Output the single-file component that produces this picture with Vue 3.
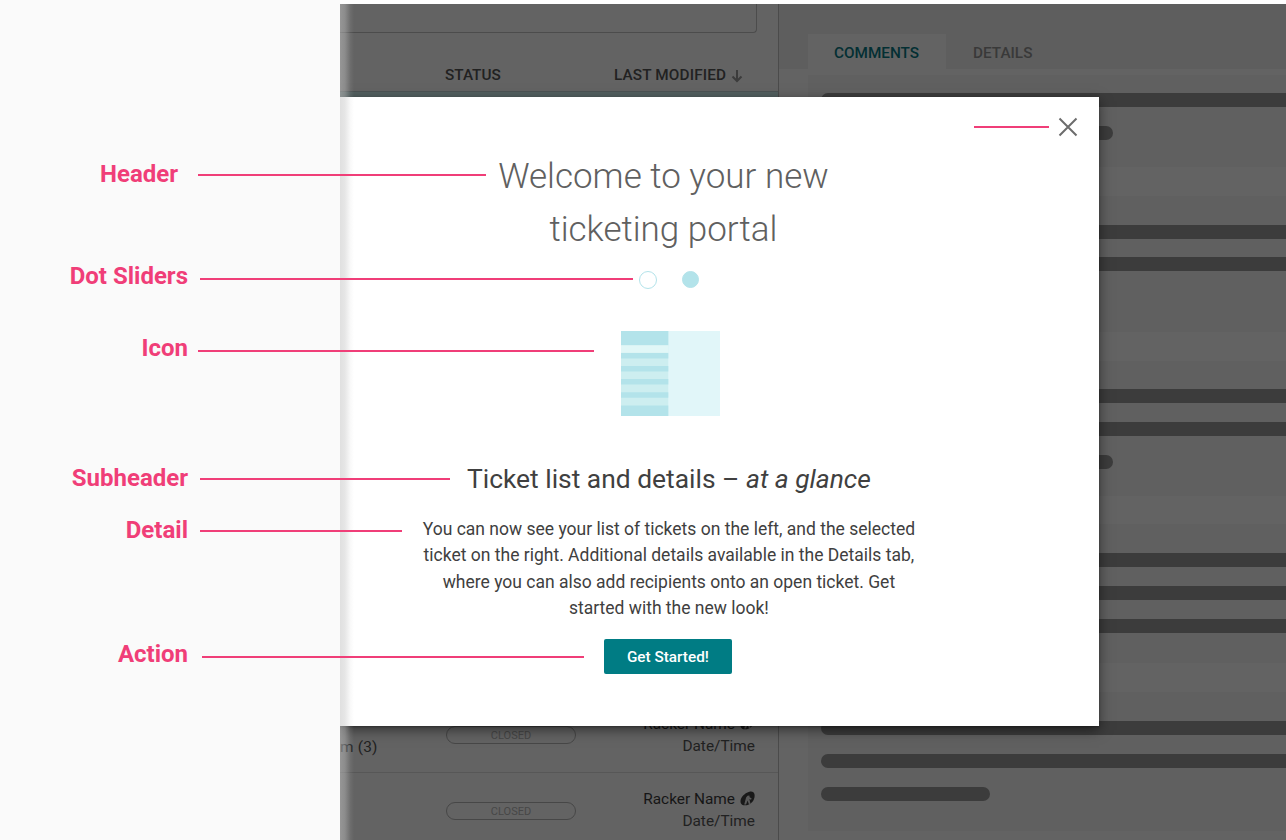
<script setup>
const callouts = [
  { id: 'header', text: 'Header', right: 178, top: 174, from: 198, to: 486 },
  { id: 'dots', text: 'Dot Sliders', right: 188, top: 276, from: 200, to: 633, line: 278 },
  { id: 'icon', text: 'Icon', right: 188, top: 348, from: 198, to: 594, line: 350 },
  { id: 'sub', text: 'Subheader', right: 188, top: 478, from: 200, to: 450 },
  { id: 'detail', text: 'Detail', right: 188, top: 530, from: 200, to: 402 },
  { id: 'action', text: 'Action', right: 188, top: 654, from: 202, to: 584, line: 656 },
].map((c) => ({ ...c, line: c.line ?? c.top }))

const comments = [['full', 'mid'], ['full', 'full'], ['full', 'full', 'mid'], ['full', 'full', 'full'], ['full', 'full', 'short']]
const sizes = ['c1', 'c2', 'c3', 'c4', 'c5']
const rows = [{ note: 'm (3)' }, { note: '' }]
</script>

<template>
  <main class="stage">
    <section class="app">
      <div class="list">
        <div class="search"></div>
        <div class="thead">
          <span class="th-status">STATUS</span>
          <span class="th-mod">LAST MODIFIED</span>
          <svg class="arrow" width="12" height="14" viewBox="0 0 12 14"><path d="M6 1v11M1.500 7.500 6 12l4.500-4.500" /></svg>
        </div>
        <div class="selected"></div>
        <div class="rows">
          <div v-for="(r, i) in rows" :key="i" class="row">
            <span class="note">{{ r.note }}</span>
            <span class="pill">CLOSED</span>
            <div class="who">
              <div class="name">
                Racker Name
                <svg width="16" height="16" viewBox="0 0 16 16">
                  <path class="disc" d="M10 .8c2.500-.7 4.500 0 5.300 2 .9 2.800-.2 6.800-2.500 9.200-2.300 2.500-5.700 3.700-9.200 3.200C1.200 14.800.2 12.500.6 10 1.100 6.600 4.300 2.600 10 .8Z" />
                  <path class="cut" d="M4.500 14.500 6.500 7 8 5l2-.3.300 2 2.200 1.300-.8 1.200-1.700-.6 1.200 5-1.700.6-1.500-4.200-1.500 4.500Z" />
                </svg>
              </div>
              <div>Date/Time</div>
            </div>
          </div>
        </div>
      </div>
      <div class="detail-pane">
        <div class="tabs">
          <span class="tab on">COMMENTS</span>
          <span class="tab">DETAILS</span>
        </div>
        <div class="comments">
          <div v-for="(c, i) in comments" :key="i" class="comment" :class="sizes[i]">
            <div v-for="(b, j) in c" :key="j" class="bar" :class="b"></div>
          </div>
        </div>
      </div>
      <div class="modal">
        <svg class="close" width="20" height="20" viewBox="0 0 20 20"><path d="M1.500 1.500l17 17M18.500 1.500l-17 17" /></svg>
        <h1>Welcome to your new<br />ticketing portal</h1>
        <div class="dots"><i class="dot"></i><i class="dot active"></i></div>
        <svg class="picture" width="99" height="85" viewBox="0 0 99 85">
          <rect width="99" height="85" fill="#e1f6f9" />
          <rect width="47.300" height="85" fill="#cdeef0" />
          <rect width="47.300" height="14.300" fill="#b3e3ea" />
          <rect y="14.300" width="47.300" height="7.500" fill="#e1f7f7" />
          <path d="M0 24.700h47.300M0 37.700h47.300M0 50.800h47.300M0 64h47.300" stroke="#b3e3ea" stroke-width="5.600" />
          <rect y="74.500" width="47.300" height="10.500" fill="#b3e3ea" />
        </svg>
        <h2>Ticket list and details – <em>at a glance</em></h2>
        <p>
          You can now see your list of tickets on the left, and the selected<br />
          ticket on the right. Additional details available in the Details tab,<br />
          where you can also add recipients onto an open ticket. Get<br />
          started with the new look!
        </p>
        <button type="button">Get Started!</button>
      </div>
      <div class="edge"></div>
    </section>
    <template v-for="c in callouts" :key="c.id">
      <div class="label" :style="{ width: c.right + 'px', top: c.top - 15 + 'px' }">{{ c.text }}</div>
      <div class="line" :style="{ left: c.from + 'px', width: c.to - c.from + 'px', top: c.line + 'px' }"></div>
    </template>
    <div class="line close-line"></div>
  </main>
</template>

<style>
body { background: #fafafa; overflow: hidden; }
</style>

<style scoped>
* { box-sizing: border-box; }
.stage { position: relative; width: 1286px; height: 840px; overflow: hidden; background: #fafafa; font-family: Roboto, "Liberation Sans", sans-serif; }
.app { position: relative; margin-left: 340px; height: 836px; box-sizing: content-box; display: flex; border-top: 4px solid #fff; background: #636363; overflow: hidden; }
.list { width: 439px; flex: none; border-right: 1px solid #4b4b4b; display: flex; flex-direction: column; color: #212121; }
.search { width: 417px; height: 29px; flex: none; border: solid #4c4c4c; border-width: 0 1px 1px 0; border-bottom-right-radius: 4px; }
.thead { height: 58px; flex: none; display: flex; align-items: flex-end; padding-bottom: 7px; font-size: 15.300px; line-height: 18px; font-weight: 500; }
.th-status { margin-left: 105px; width: 169px; }
.th-mod { white-space: nowrap; letter-spacing: .15px; }
.arrow { margin: 0 0 1px 5px; }
.arrow path { fill: none; stroke: #3c3c3c; stroke-width: 2; }
.selected { height: 600px; flex: none; border-top: 1px solid #4c5354; background: #536060; }
.rows { margin-top: 6px; background: #636363; }
.row { height: 75.500px; display: flex; border-bottom: 1px solid #575757; font-size: 15.400px; line-height: 22px; }
.note { width: 106px; padding-top: 39px; height: 75px; flex: none; letter-spacing: .2px; }
.pill { width: 130px; height: 18px; margin-top: 29px; flex: none; border: 1px solid #474747; border-radius: 9px; color: #474747; font-size: 11px; line-height: 18px; text-align: center; }
.who { width: 179px; padding-top: 15.500px; text-align: right; white-space: nowrap; }
.name { display: flex; justify-content: flex-end; align-items: center; gap: 5px; color: #161616; }
.name svg { width: 15px; height: 15px; margin-top: -2px; }
.disc { fill: #191919; }
.cut { fill: #585858; }
.detail-pane { flex: 1; min-width: 0; }
.tabs { height: 65px; padding: 30px 0 0 29px; display: flex; background: #5e5e5e; font-size: 15.300px; font-weight: 500; line-height: 39px; }
.tab { padding: 0 27px; color: #393939; }
.tab.on { width: 138px; padding: 0 0 0 26px; background: #636363; color: #032f33; }
.comments { padding: 6px 0 0 29px; }
.comment { background: #606060; margin-bottom: 29px; overflow: hidden; display: flex; flex-direction: column; gap: 18.900px; padding: 28.500px 0 0 13px; }
.c1 { height: 92px; padding-top: 18px; }
.c2 { height: 135.500px; }
.c3 { height: 135.500px; }
.c4 { height: 139px; margin-top: -.6px; }
.c5 { height: 139px; }
.bar { height: 14px; flex: none; background: #3c3c3c; border-radius: 7px 0 0 7px; }
.mid { width: 292px; border-radius: 7px; }
.short { width: 169px; border-radius: 7px; }
.modal { position: absolute; left: 0; top: 92.500px; width: 758.800px; height: 629.500px; padding-right: 101px; background: #fff; box-shadow: 0 4px 12px rgba(0, 0, 0, .5), 0 1px 2px rgba(0, 0, 0, .25); display: flex; flex-direction: column; align-items: center; text-align: center; }
.close { position: absolute; left: 718px; top: 20px; }
.close path { stroke: #6c6c6c; stroke-width: 2; }
h1 { margin: 53.500px 0 0; transform: translate(-5.500px, -.5px); font-size: 35px; line-height: 53px; font-weight: 300; color: #606060; white-space: nowrap; }
.dots { display: flex; gap: 25px; margin: 15px 0 0; }
.dot { width: 18px; height: 18px; border: 1px solid #b3e3ea; border-radius: 50%; }
.dot.active { width: 17px; height: 17px; background: #b3e3ea; }
.picture { margin: 41.500px 0 0 4px; flex: none; }
h2 { margin: 47.500px 0 0; font-size: 26.400px; line-height: 32px; font-weight: 400; color: #404040; white-space: nowrap; }
p { margin: 21px 0 0; font-size: 17.500px; line-height: 26.300px; color: #404040; white-space: nowrap; }
button { margin: 17.500px 0 0 -2px; width: 128px; height: 35px; padding: 0; border: 0; border-radius: 2px; background: #007c84; color: #fff; font: 500 15.300px/36px Roboto, sans-serif; }
.edge { position: absolute; inset: 0 auto 0 0; width: 14px; background: linear-gradient(90deg, rgba(196, 196, 196, .53), rgba(196, 196, 196, .42) 35%, rgba(196, 196, 196, .1) 75%, rgba(196, 196, 196, 0)); }
.label { position: absolute; left: 0; text-align: right; font-size: 24px; line-height: 30px; font-weight: 700; color: #f03e78; }
.line { position: absolute; height: 2px; background: #f03e78; }
.close-line { left: 974px; top: 126px; width: 75px; }
</style>
